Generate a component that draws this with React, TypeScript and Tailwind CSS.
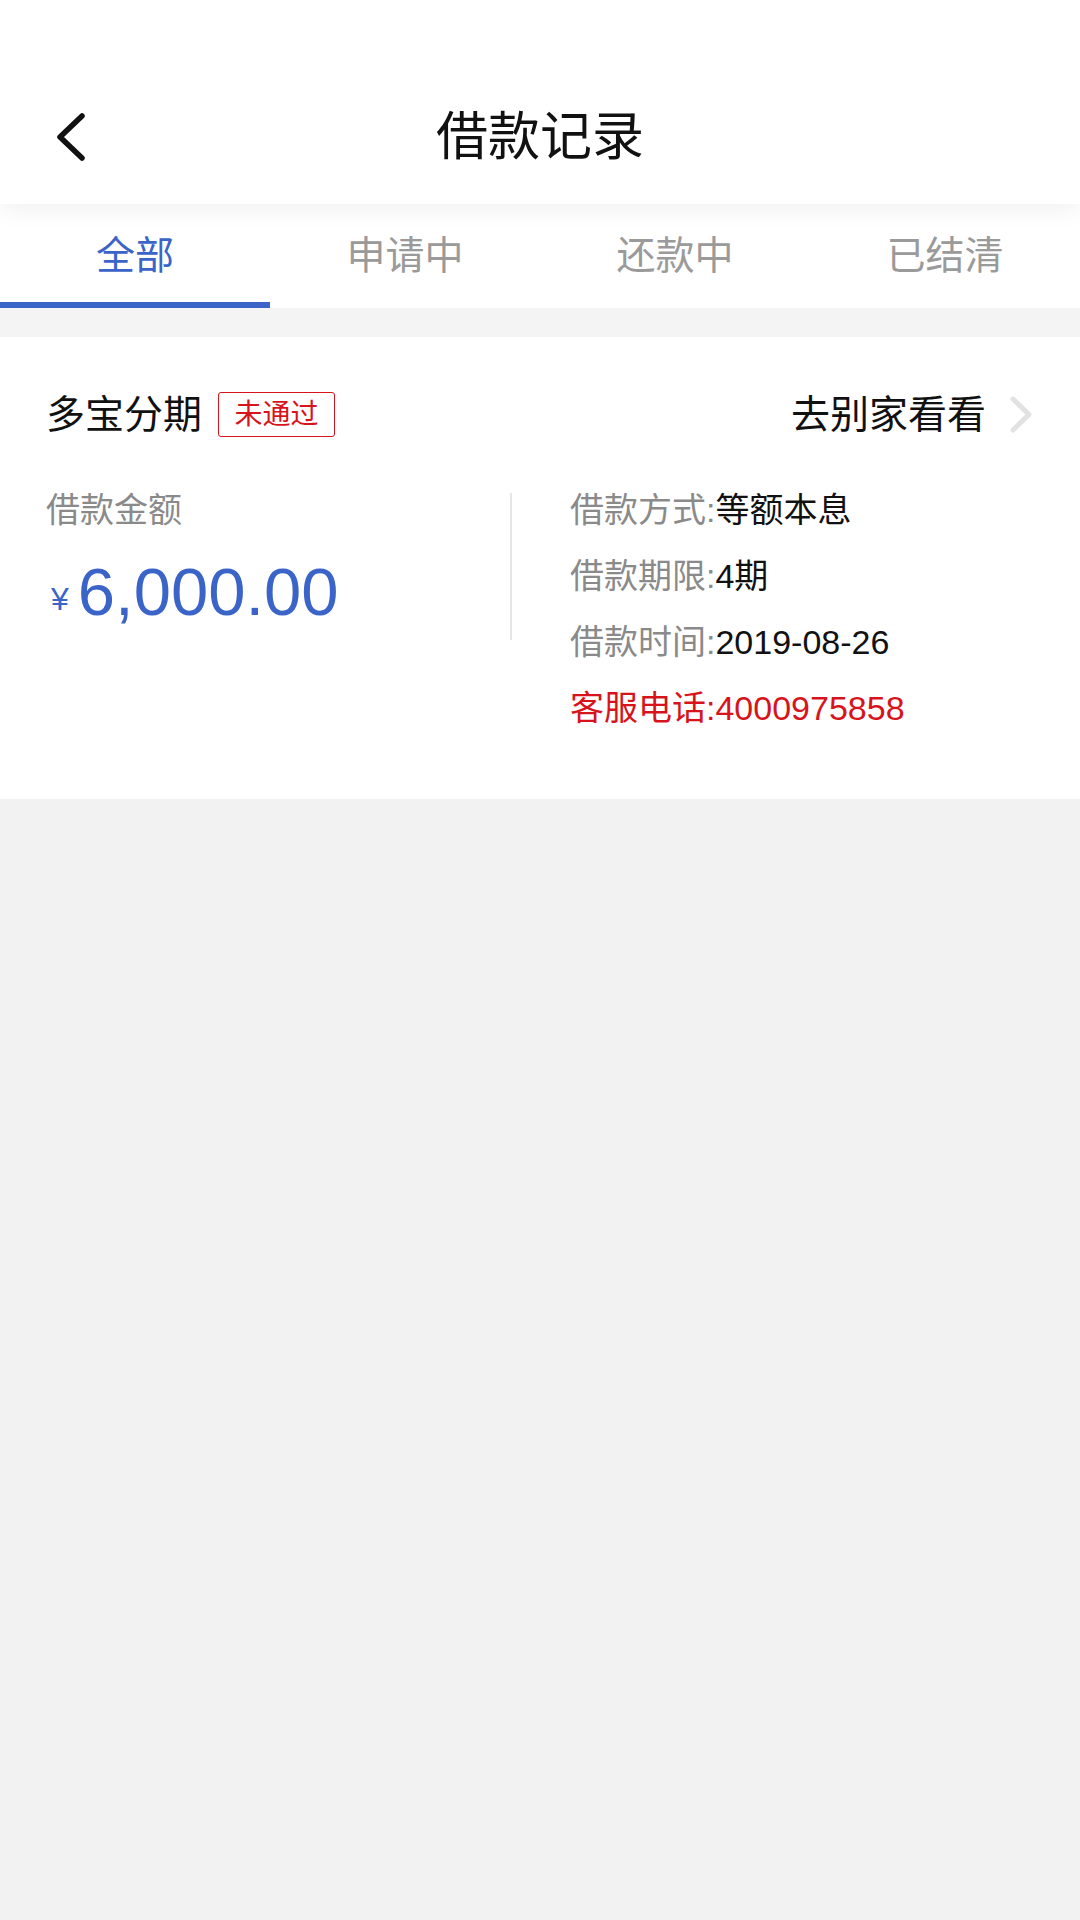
import { useState } from "react";

const tabs = ["全部", "申请中", "还款中", "已结清"];

const details = [
  { label: "借款方式:", value: "等额本息" },
  { label: "借款期限:", value: "4期" },
  { label: "借款时间:", value: "2019-08-26" },
];

export default function App() {
  const [active, setActive] = useState(0);

  return (
    <div className="w-[1080px] min-h-[1920px] bg-[#f2f2f2] font-['Liberation_Sans','Noto_Sans_CJK_SC',sans-serif]">
      {/* Header with status bar space */}
      <div className="relative z-10 bg-white pt-[70px] shadow-[0_6px_22px_rgba(0,0,0,0.06)]">
        <div className="relative flex h-[134px] items-center justify-center">
          <button className="absolute left-[56px] top-[42px]">
            <svg width="30" height="50" viewBox="0 0 30 50" fill="none">
              <path
                d="M26 4 L4 25 L26 46"
                stroke="#111"
                strokeWidth="5.5"
                strokeLinecap="round"
                strokeLinejoin="round"
              />
            </svg>
          </button>
          <h1 className="text-[52px] leading-none text-[#111]">借款记录</h1>
        </div>
      </div>

      {/* Tabs */}
      <div className="grid h-[104px] grid-cols-4 bg-white">
        {tabs.map((tab, i) => (
          <button
            key={tab}
            onClick={() => setActive(i)}
            className="flex flex-col items-center justify-end"
          >
            <span
              className={`mb-[27px] text-[39px] leading-none ${
                active === i ? "text-[#3b64c8]" : "text-[#9a9a9a]"
              }`}
            >
              {tab}
            </span>
            <div
              className={`h-[6px] w-full ${
                active === i ? "bg-[#3b64c8]" : "bg-transparent"
              }`}
            />
          </button>
        ))}
      </div>

      <div className="h-[29px] bg-[#f4f4f4]" />

      {/* Loan card */}
      <div className="h-[462px] bg-white px-[46px] pt-[55px]">
        <div className="flex h-[45px] items-center justify-between">
          <div className="flex items-center">
            <span className="text-[39px] leading-none text-[#111]">多宝分期</span>
            <span className="ml-[16px] flex h-[45px] w-[117px] items-center justify-center rounded-[3px] border-[1.5px] border-[#d7141c] text-[28px] leading-none text-[#d7141c]">
              未通过
            </span>
          </div>
          <div className="flex items-center">
            <span className="text-[39px] leading-none text-[#111]">去别家看看</span>
            <svg className="ml-[24px]" width="24" height="38" viewBox="0 0 24 38" fill="none">
              <path
                d="M3 3 L19 18.5 L3 34"
                stroke="#e2e2e2"
                strokeWidth="5"
                strokeLinecap="round"
                strokeLinejoin="round"
              />
            </svg>
          </div>
        </div>

        <div className="mt-[53px] flex">
          <div className="w-[464px]">
            <div className="flex h-[40px] items-center text-[34px] leading-none text-[#8a8a8a]">
              借款金额
            </div>
            <div className="mt-[27px] h-[70px] pl-[5px] text-[67px] leading-[70px] text-[#3b64c8]">
              <span className="mr-[9px] align-[5px] text-[32px]">¥</span>
              6,000.00
            </div>
          </div>
          <div className="mt-[3px] h-[147px] w-[2px] bg-[#e6e6e6]" />
          <div className="flex flex-col gap-[26px] pl-[58px]">
            {details.map((d) => (
              <div key={d.label} className="flex h-[40px] items-center text-[34px] leading-none">
                <span className="text-[#8a8a8a]">{d.label}</span>
                <span className="text-[#111]">{d.value}</span>
              </div>
            ))}
            <div className="flex h-[40px] items-center text-[34px] leading-none text-[#d7141c]">
              客服电话:4000975858
            </div>
          </div>
        </div>
      </div>
    </div>
  );
}
